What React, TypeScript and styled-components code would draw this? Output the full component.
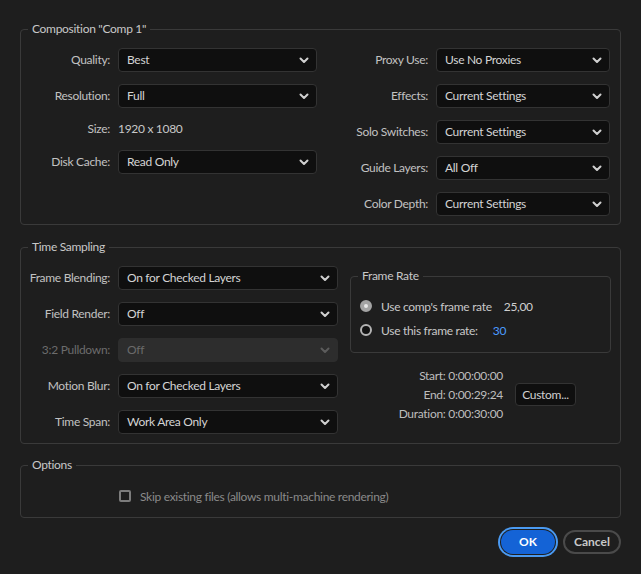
import styled, { createGlobalStyle } from 'styled-components';

const GlobalStyle = createGlobalStyle`
  html, body {
    margin: 0;
    background: #1e1e1e;
  }
  body {
    font-family: Lato, "Open Sans", sans-serif;
    font-size: 12px;
    letter-spacing: -0.3px;
    color: #c4c4c4;
  }
`;

const Dialog = styled.div`
  width: 641px;
  height: 574px;
  box-sizing: border-box;
  padding: 21px 20px 0;
  display: flex;
  flex-direction: column;
`;

const Group = styled.fieldset<{ $pad: string; $gap?: number }>`
  margin: ${p => p.$gap || 0}px 0 0;
  padding: ${p => p.$pad};
  border: 1px solid #3a3a3a;
  border-radius: 4px;
  min-width: 0;
`;

const Legend = styled.legend`
  margin-left: 7px;
  padding: 0 4px;
  line-height: 16px;
  color: #c8c8c8;
`;

const Columns = styled.div`
  display: flex;
  justify-content: space-between;
  align-items: flex-start;
`;

const Form = styled.div<{ $cols: string }>`
  display: grid;
  grid-template-columns: ${p => p.$cols};
  column-gap: 8px;
  row-gap: 12px;
  align-items: center;
`;

const Label = styled.span<{ $dim?: boolean }>`
  text-align: right;
  line-height: 16px;
  white-space: nowrap;
  color: ${p => (p.$dim ? '#6c6c6c' : '#c2c2c2')};
`;

const Plain = styled.span`
  line-height: 18px;
  color: #c8c8c8;
`;

const SelectBox = styled.div<{ $disabled?: boolean }>`
  height: 24px;
  box-sizing: border-box;
  display: flex;
  align-items: center;
  justify-content: space-between;
  padding: 0 7px 1px 8px;
  border-radius: 4px;
  border: 1px solid ${p => (p.$disabled ? '#2d2d2d' : '#333333')};
  background: ${p => (p.$disabled ? '#2d2d2d' : '#0f0f0f')};
  color: ${p => (p.$disabled ? '#6a6a6a' : '#d4d4d4')};
`;

const Chevron = styled.svg<{ $disabled?: boolean }>`
  width: 10px;
  height: 7px;
  margin-top: 1px;
  stroke: ${p => (p.$disabled ? '#5c5c5c' : '#d0d0d0')};
`;

const Select = ({ value, disabled }: { value: string; disabled?: boolean }) => (
  <SelectBox $disabled={disabled}>
    <span>{value}</span>
    <Chevron $disabled={disabled} viewBox="0 0 10 7" fill="none" strokeWidth="2" strokeLinecap="round" strokeLinejoin="round">
      <polyline points="1.5,1.5 5,5 8.5,1.5" />
    </Chevron>
  </SelectBox>
);

const Row = ({ label, children, dim }: { label: string; children: React.ReactNode; dim?: boolean }) => (
  <>
    <Label $dim={dim}>{label}</Label>
    {children}
  </>
);

const Sampling = styled.div`
  display: flex;
  gap: 12px;
  align-items: flex-start;
`;

const RightSide = styled.div`
  margin-top: 2px;
  flex: 1;
  display: flex;
  flex-direction: column;
`;

const Radios = styled.div`
  display: flex;
  flex-direction: column;
  gap: 4px;
  padding-left: 9px;
`;

const RadioRow = styled.div`
  display: flex;
  align-items: center;
  height: 20px;
  color: #c8c8c8;
`;

const RadioDot = styled.span<{ $on?: boolean }>`
  width: 12px;
  height: 12px;
  box-sizing: border-box;
  border-radius: 50%;
  margin-right: 9px;
  border: ${p => (p.$on ? '4px solid #a4a4a4' : '2px solid #b4b4b4')};
  background: ${p => (p.$on ? '#e8e8e8' : '#121212')};
`;

const Rate = styled.span<{ $blue?: boolean; $gap: number }>`
  margin-left: ${p => p.$gap}px;
  color: ${p => (p.$blue ? '#4b9bff' : '#d0d0d0')};
`;

const Timing = styled.div`
  margin-top: 13px;
  display: flex;
  align-items: center;
  gap: 12px;
`;

const Times = styled.div`
  width: 153px;
  text-align: right;
  line-height: 19px;
  color: #bdbdbd;
`;

const SmallButton = styled.button`
  width: 61px;
  height: 23px;
  padding: 0;
  border: 1px solid #333333;
  border-radius: 4px;
  background: #0f0f0f;
  color: #d0d0d0;
  font: inherit;
  letter-spacing: inherit;
`;

const CheckRow = styled.label`
  display: flex;
  align-items: center;
  height: 16px;
  padding-left: 98px;
  color: #8a8a8a;
`;

const CheckBox = styled.span`
  width: 12px;
  height: 12px;
  box-sizing: border-box;
  border: 2px solid #7c7c7c;
  border-radius: 2px;
  margin-right: 9px;
`;

const Buttons = styled.div`
  margin-top: 12px;
  display: flex;
  justify-content: flex-end;
  gap: 8px;
`;

const PillButton = styled.button<{ $primary?: boolean }>`
  height: 24px;
  padding: 0 0 1px;
  border-radius: 12px;
  font: inherit;
  font-weight: 700;
  letter-spacing: 0;
  width: ${p => (p.$primary ? 54 : 58)}px;
  border: ${p => (p.$primary ? 'none' : '2px solid #4a4a4a')};
  background: ${p => (p.$primary ? '#1463d6' : 'transparent')};
  color: ${p => (p.$primary ? '#ffffff' : '#c8c8c8')};
  box-shadow: ${p => (p.$primary ? '0 0 0 1px #1e1e1e, 0 0 0 3px #4a9af2' : 'none')};
`;

export default function App() {
  return (
    <>
      <GlobalStyle />
      <Dialog>
        <Group $pad="11px 10px 8px 0">
          <Legend>Composition "Comp 1"</Legend>
          <Columns>
            <Form $cols="89px 199px">
              <Row label="Quality:"><Select value="Best" /></Row>
              <Row label="Resolution:"><Select value="Full" /></Row>
              <Row label="Size:"><Plain>1920 x 1080</Plain></Row>
              <Row label="Disk Cache:"><Select value="Read Only" /></Row>
            </Form>
            <Form $cols="auto 174px">
              <Row label="Proxy Use:"><Select value="Use No Proxies" /></Row>
              <Row label="Effects:"><Select value="Current Settings" /></Row>
              <Row label="Solo Switches:"><Select value="Current Settings" /></Row>
              <Row label="Guide Layers:"><Select value="All Off" /></Row>
              <Row label="Color Depth:"><Select value="Current Settings" /></Row>
            </Form>
          </Columns>
        </Group>

        <Group $pad="11px 9px 9px 0" $gap={14}>
          <Legend>Time Sampling</Legend>
          <Sampling>
            <Form $cols="89px 220px">
              <Row label="Frame Blending:"><Select value="On for Checked Layers" /></Row>
              <Row label="Field Render:"><Select value="Off" /></Row>
              <Row label="3:2 Pulldown:" dim><Select value="Off" disabled /></Row>
              <Row label="Motion Blur:"><Select value="On for Checked Layers" /></Row>
              <Row label="Time Span:"><Select value="Work Area Only" /></Row>
            </Form>
            <RightSide>
              <Group $pad="12px 0 12px 0">
                <Legend>Frame Rate</Legend>
                <Radios>
                  <RadioRow>
                    <RadioDot $on />
                    Use comp's frame rate
                    <Rate $gap={12}>25,00</Rate>
                  </RadioRow>
                  <RadioRow>
                    <RadioDot />
                    Use this frame rate:
                    <Rate $gap={15} $blue>30</Rate>
                  </RadioRow>
                </Radios>
              </Group>
              <Timing>
                <Times>
                  <div>Start: 0:00:00:00</div>
                  <div>End: 0:00:29:24</div>
                  <div>Duration: 0:00:30:00</div>
                </Times>
                <SmallButton>Custom...</SmallButton>
              </Timing>
            </RightSide>
          </Sampling>
        </Group>

        <Group $pad="15px 0 13px 0" $gap={13}>
          <Legend>Options</Legend>
          <CheckRow>
            <CheckBox />
            Skip existing files (allows multi-machine rendering)
          </CheckRow>
        </Group>

        <Buttons>
          <PillButton $primary>OK</PillButton>
          <PillButton>Cancel</PillButton>
        </Buttons>
      </Dialog>
    </>
  );
}
